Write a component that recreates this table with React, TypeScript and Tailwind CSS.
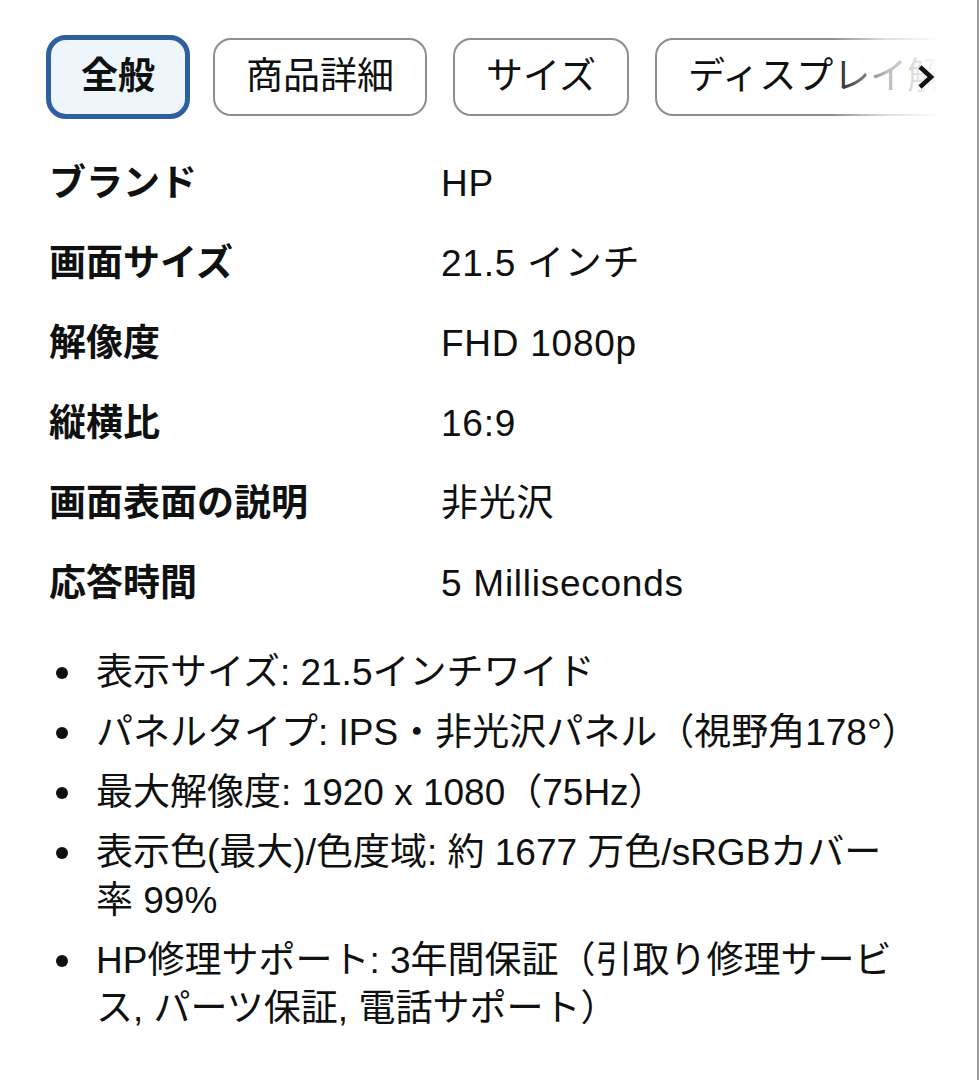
import { ReactNode } from 'react';

const specs = [
  { label: 'ブランド', value: 'HP' },
  { label: '画面サイズ', value: '21.5 インチ' },
  { label: '解像度', value: 'FHD 1080p' },
  { label: '縦横比', value: '16:9' },
  { label: '画面表面の説明', value: '非光沢' },
  { label: '応答時間', value: '5 Milliseconds' },
];

const bullets: ReactNode[] = [
  '表示サイズ: 21.5インチワイド',
  'パネルタイプ: IPS・非光沢パネル（視野角178°）',
  '最大解像度: 1920 x 1080（75Hz）',
  <>表示色(最大)/色度域: 約 1677 万色/sRGBカバー<br />率 99%</>,
  <>HP修理サポート: 3年間保証（引取り修理サービ<br />ス, パーツ保証, 電話サポート）</>,
];

function Tab({ label, active }: { label: string; active?: boolean }) {
  if (active) {
    return (
      <div className="shrink-0 h-[84px] px-[30px] flex items-center rounded-[20px] border-[5px] border-[#2e5f9f] bg-[#eef5fb] font-bold">
        {label}
      </div>
    );
  }
  return (
    <div className="shrink-0 h-[78px] px-[31px] flex items-center rounded-[18px] border-2 border-[#8e8e8e] bg-white whitespace-nowrap">
      {label}
    </div>
  );
}

export default function App() {
  return (
    <div
      className="w-[979px] min-h-screen bg-white border-r-2 border-[#9a9a9a] text-[#0f1111] text-[37px]"
      style={{ fontFamily: '"Liberation Sans", "Noto Sans CJK JP", sans-serif' }}
    >
      <div className="pt-[35px] pl-[46px]">
        {/* Tabs */}
        <div className="relative w-[894px] overflow-hidden">
          <div className="flex items-center gap-[23px]">
            <Tab label="全般" active />
            <div className="flex items-center gap-[26px]">
              <Tab label="商品詳細" />
              <Tab label="サイズ" />
              <Tab label="ディスプレイ解像度" />
            </div>
          </div>
          <div className="absolute right-0 top-0 bottom-0 w-[110px] bg-gradient-to-r from-white/0 via-white/70 to-white flex items-center justify-end pr-[4px]">
            <svg width="20" height="26" viewBox="0 0 20 26" fill="none">
              <polyline points="4,3 15,13 4,23" stroke="#111" strokeWidth="4.5" strokeLinejoin="miter" />
            </svg>
          </div>
        </div>

        {/* Spec table */}
        <div className="mt-[25px]">
          {specs.map((s) => (
            <div key={s.label} className="flex items-center h-[80px] pl-[3px]">
              <div className="w-[392px] font-bold">{s.label}</div>
              <div className="tracking-[0.02em]">{s.value}</div>
            </div>
          ))}
        </div>

        {/* Bullets */}
        <ul className="mt-[25px] flex flex-col gap-[12px] w-[894px]">
          {bullets.map((b, i) => (
            <li key={i} className="flex leading-[48px]">
              <div className="w-[50px] shrink-0 flex justify-start pl-[10px] pt-[18px]">
                <span className="block w-[12px] h-[12px] rounded-full bg-[#0f1111]" />
              </div>
              <div className="flex-1">{b}</div>
            </li>
          ))}
        </ul>
      </div>
    </div>
  );
}
